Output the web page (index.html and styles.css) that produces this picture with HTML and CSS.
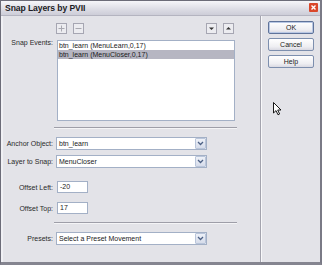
FILE: index.html
```html
<!DOCTYPE html>
<html>
<head>
<meta charset="utf-8">
<link rel="stylesheet" href="styles.css">
</head>
<body>
<div class="window">
  <div class="titlebar">
    <span class="title">Snap Layers by PVII</span>
    <span class="close"><svg width="9" height="9" viewBox="0 0 9 9"><rect x="0" y="0" width="9" height="9" rx="1" fill="#d9472b"/><path d="M2.5 2.5 L6.5 6.5 M6.5 2.5 L2.5 6.5" stroke="#fff" stroke-width="1.4"/></svg></span>
  </div>
  <div class="body">
    <div class="main">
      <div class="toolbar">
        <div class="tools">
          <span class="tbtn"><svg width="9" height="9" viewBox="0 0 9 9"><path d="M4.5 1.5 V7.5 M1.5 4.5 H7.5" stroke="#a8a8b0" stroke-width="1"/></svg></span>
          <span class="tbtn"><svg width="9" height="9" viewBox="0 0 9 9"><path d="M1.5 4.5 H7.5" stroke="#a8a8b0" stroke-width="1"/></svg></span>
        </div>
        <div class="tools">
          <span class="tbtn"><svg width="9" height="9" viewBox="0 0 9 9"><path d="M2 3.5 H7 L4.5 6 Z" fill="#333"/></svg></span>
          <span class="tbtn"><svg width="9" height="9" viewBox="0 0 9 9"><path d="M2 5.5 H7 L4.5 3 Z" fill="#333"/></svg></span>
        </div>
      </div>
      <div class="row events">
        <span class="label">Snap Events:</span>
        <div class="list">
          <div class="item">btn_learn (MenuLearn,0,17)</div>
          <div class="item sel">btn_learn (MenuCloser,0,17)</div>
        </div>
      </div>
      <div class="sep s1"></div>
      <div class="row r-anchor">
        <span class="label">Anchor Object:</span>
        <div class="select"><span class="val">btn_learn</span><span class="drop"><svg width="7" height="5" viewBox="0 0 7 5"><path d="M1 1 L3.5 3.5 L6 1" stroke="#4d6185" stroke-width="1.3" fill="none"/></svg></span></div>
      </div>
      <div class="row r-layer">
        <span class="label">Layer to Snap:</span>
        <div class="select"><span class="val">MenuCloser</span><span class="drop"><svg width="7" height="5" viewBox="0 0 7 5"><path d="M1 1 L3.5 3.5 L6 1" stroke="#4d6185" stroke-width="1.3" fill="none"/></svg></span></div>
      </div>
      <div class="row r-left">
        <span class="label">Offset Left:</span>
        <div class="input">-20</div>
      </div>
      <div class="row r-top">
        <span class="label">Offset Top:</span>
        <div class="input">17</div>
      </div>
      <div class="sep s2"></div>
      <div class="row r-presets">
        <span class="label">Presets:</span>
        <div class="select"><span class="val">Select a Preset Movement</span><span class="drop"><svg width="7" height="5" viewBox="0 0 7 5"><path d="M1 1 L3.5 3.5 L6 1" stroke="#4d6185" stroke-width="1.3" fill="none"/></svg></span></div>
      </div>
    </div>
    <div class="side">
      <div class="btn default">OK</div>
      <div class="btn">Cancel</div>
      <div class="btn">Help</div>
    </div>
  </div>
  <svg class="cursor" width="9" height="14" viewBox="0 0 9 14"><path d="M0.5 0.5 V11 L3 8.6 L5 12.8 L6.6 12 L4.7 8 H8 Z" fill="#fff" stroke="#000" stroke-width="0.9" stroke-linejoin="round"/></svg>
</div>
</body>
</html>
```
FILE: styles.css
```css
html, body {
  margin: 0;
  padding: 0;
  background: #e2e1e6;
}
.window {
  position: relative;
  width: 322px;
  height: 265px;
  box-sizing: border-box;
  background: #e3e3e8;
  border-left: 1px solid #6c6c78;
  border-right: 2px solid #7a7a86;
  border-bottom: 3px solid #858590;
  font-family: "Liberation Sans", Arial, sans-serif;
  font-size: 7px;
  color: #1a1a1a;
  display: flex;
  flex-direction: column;
}
.titlebar {
  height: 16px;
  box-sizing: border-box;
  border-top: 1px solid #6c6c78;
  border-bottom: 1px solid #b4b4c0;
  background: linear-gradient(#f6f6f9, #dcdce4 60%, #cdcdd8);
  display: flex;
  align-items: center;
  justify-content: space-between;
  padding: 0 2px 0 4px;
}
.title {
  font-weight: bold;
  font-size: 8.6px;
  color: #1c1c24;
  letter-spacing: -0.1px;
}
.close {
  display: flex;
  margin-top: -1px;
}
.body {
  flex: 1;
  display: flex;
  box-shadow: inset 2px 0 0 #f0f0f4;
}
.main {
  width: 259px;
  padding-top: 7px;
  display: flex;
  flex-direction: column;
}
.toolbar {
  display: flex;
  justify-content: space-between;
  padding: 0 26px 0 55px;
  height: 11px;
}
.tools {
  display: flex;
  gap: 6px;
}
.tbtn {
  width: 11px;
  height: 11px;
  box-sizing: border-box;
  border: 1px solid #a6a6b2;
  background: #ececf0;
  display: flex;
  align-items: center;
  justify-content: center;
}
.row {
  display: flex;
  align-items: center;
}
.label {
  width: 52px;
  text-align: right;
  margin-right: 3px;
  white-space: nowrap;
  color: #2a2a2a;
}
.events {
  margin-top: 6px;
  align-items: flex-start;
}
.events .label {
  margin-right: 4px;
  line-height: 8px;
  margin-top: -1px;
}
.list {
  width: 178px;
  height: 81px;
  box-sizing: border-box;
  border: 1px solid #a3b0c6;
  background: #fff;
}
.item {
  height: 9px;
  line-height: 9px;
  padding-left: 1px;
  white-space: nowrap;
}
.item.sel {
  background: #b6b6c2;
}
.sep {
  margin-left: 53px;
  width: 183px;
  height: 0;
  border-top: 1px solid #9e9ea8;
  border-bottom: 1px solid #f4f4f6;
}
.s1 { margin-top: 6px; }
.s2 { margin-top: 8px; }
.select {
  width: 151px;
  height: 13px;
  box-sizing: border-box;
  border: 1px solid #a3b0c6;
  background: #fff;
  display: flex;
  align-items: center;
  justify-content: space-between;
}
.val {
  padding-left: 2px;
  white-space: nowrap;
}
.drop {
  width: 11px;
  height: 11px;
  box-sizing: border-box;
  border: 1px solid #b9c5da;
  border-radius: 1px;
  background: linear-gradient(#eef1f8, #d6dcea);
  display: flex;
  align-items: center;
  justify-content: center;
}
.r-anchor { margin-top: 8px; }
.r-layer { margin-top: 5px; }
.r-left { margin-top: 13px; }
.r-top { margin-top: 9px; }
.r-presets { margin-top: 8px; }
.input {
  width: 31px;
  height: 12px;
  box-sizing: border-box;
  border: 1px solid #a3b0c6;
  background: #fff;
  line-height: 10px;
  padding-left: 2px;
  margin-left: 1px;
}
.side {
  flex: 1;
  border-left: 1px solid #a4a4ae;
  box-shadow: inset 1px 0 0 #f8f8fa;
  padding: 5px 0 0 7px;
  display: flex;
  flex-direction: column;
  gap: 4px;
}
.btn {
  width: 46px;
  height: 13px;
  box-sizing: border-box;
  border: 1px solid #7d8fae;
  border-radius: 2px;
  background: linear-gradient(#ffffff, #eeeef2 70%, #d9d9e2);
  text-align: center;
  line-height: 11px;
  font-size: 7px;
  color: #222;
}
.btn.default {
  border-color: #5f739a;
  box-shadow: inset 0 0 0 1px #b9c8e4;
}
.cursor {
  position: absolute;
  left: 272px;
  top: 102px;
}
```
